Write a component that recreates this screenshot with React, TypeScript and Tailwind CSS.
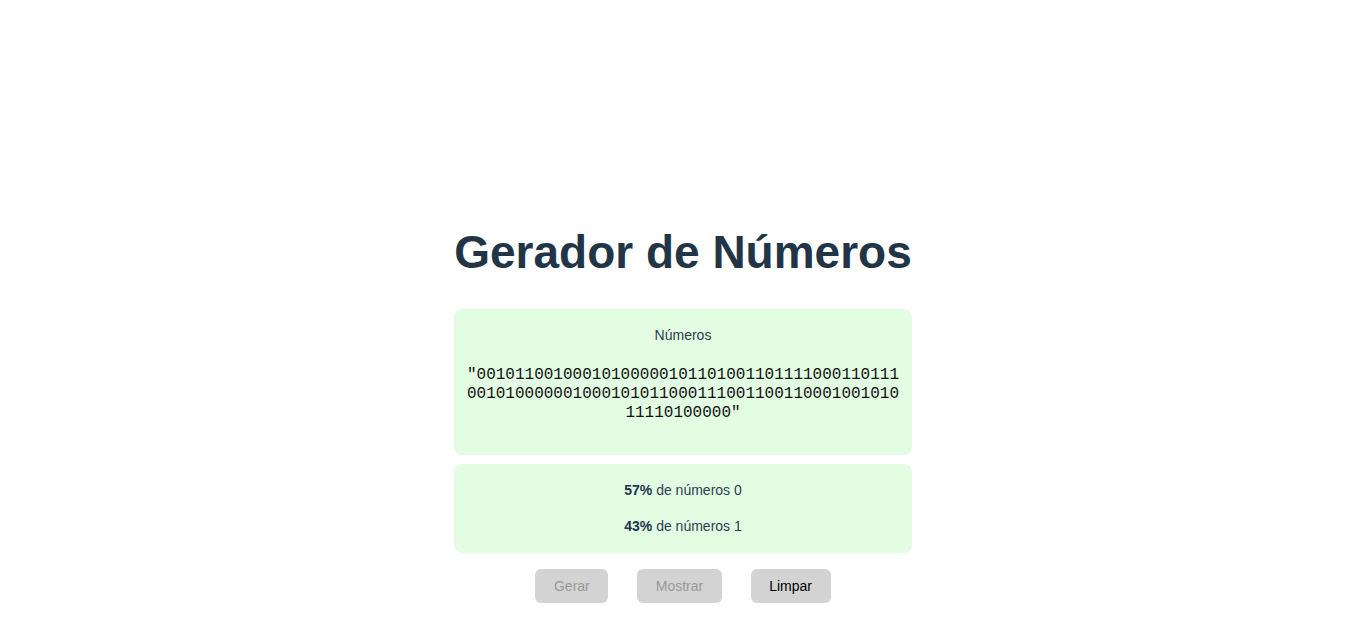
import React from "react";

export default function App() {
  const lines = [
    '"00101100100010100000101101001101111000110111',
    "001010000001000101011000111001100110001001010",
    '11110100000"',
  ];
  return (
    <div
      className="min-h-[636px] w-full bg-white flex flex-col items-center pt-[224px]"
      style={{ fontFamily: '"Liberation Sans", Arial, sans-serif' }}
    >
      <div className="w-[458px] flex flex-col items-stretch">
        <h1 className="h-[56px] text-[46px] leading-[56px] font-bold text-[#213547] text-center whitespace-nowrap mb-[29px]">
          Gerador de Números
        </h1>
        <div className="h-[146px] bg-[#e3fde3] rounded-[8px] pt-[18px] flex flex-col items-center">
          <p className="text-[14px] leading-[16px] text-[#2c3e50]">Números</p>
          <div
            className="mt-[23px] text-[16px] leading-[19px] text-[#111111] text-center"
            style={{ fontFamily: '"Liberation Mono", "DejaVu Sans Mono", monospace' }}
          >
            {lines.map((l, i) => (
              <div key={i}>{l}</div>
            ))}
          </div>
        </div>
        <div className="h-[89px] bg-[#e3fde3] rounded-[8px] mt-[9px] pt-[18px] flex flex-col items-center gap-[20px] text-[14px] leading-[16px] text-[#2c3e50]">
          <p>
            <span className="font-bold text-[#213547]">57%</span> de números 0
          </p>
          <p>
            <span className="font-bold text-[#213547]">43%</span> de números 1
          </p>
        </div>
        <div className="mt-[16px] flex justify-center gap-[29px]">
          <button
            disabled
            className="h-[34px] px-[18.5px] rounded-[6px] bg-[#d3d3d3] text-[14px] text-[#9b9999]"
          >
            Gerar
          </button>
          <button
            disabled
            className="h-[34px] px-[18.5px] rounded-[6px] bg-[#d3d3d3] text-[14px] text-[#9b9999]"
          >
            Mostrar
          </button>
          <button className="h-[34px] px-[18.5px] rounded-[6px] bg-[#d3d3d3] text-[14px] text-[#000000]">
            Limpar
          </button>
        </div>
      </div>
    </div>
  );
}
